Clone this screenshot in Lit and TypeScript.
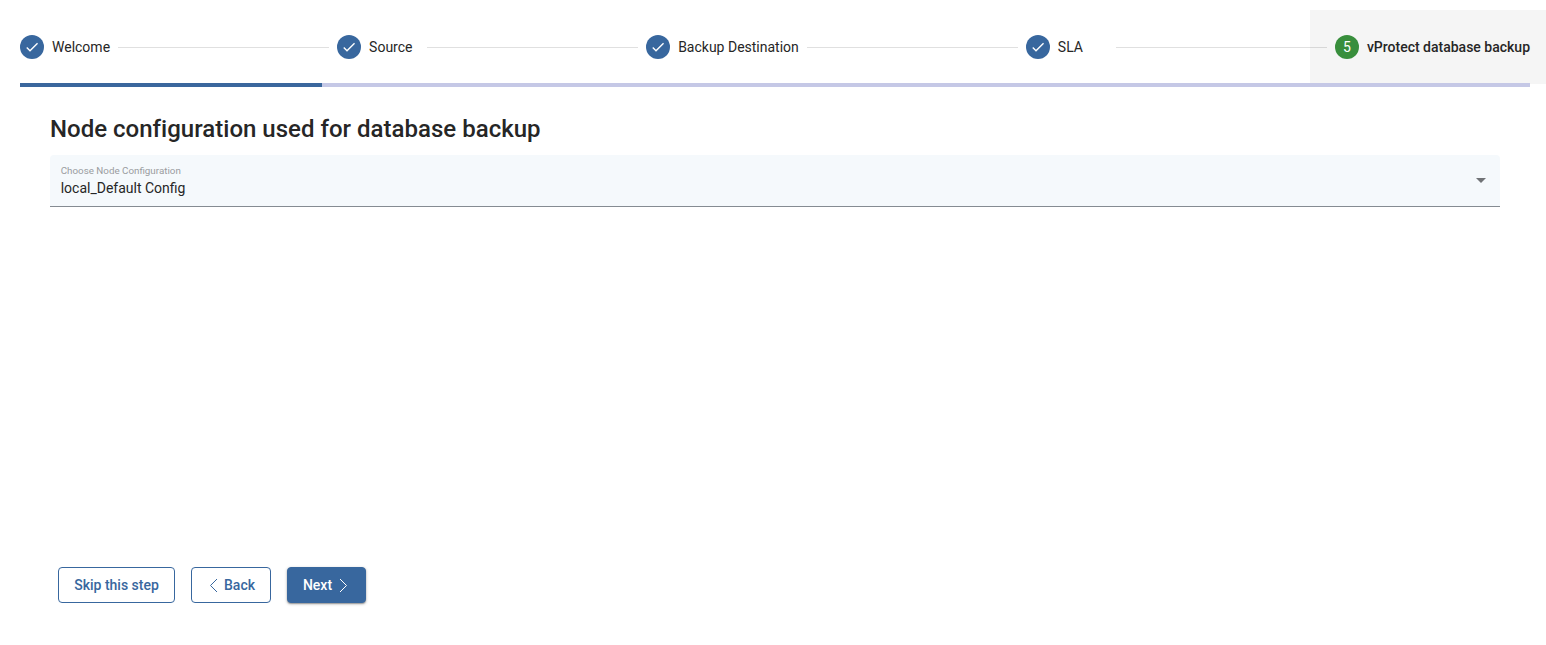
import { LitElement, html, css } from 'lit';
import { customElement, property } from 'lit/decorators.js';
import { classMap } from 'lit/directives/class-map.js';

@customElement('step-header')
class StepHeader extends LitElement {
  @property() label = '';
  @property({ type: Number }) index = 1;
  @property({ type: Boolean, reflect: true }) active = false;

  static styles = css`
    :host { display: flex; align-items: center; height: 74px; flex: none; box-sizing: border-box; }
    :host([active]) { background: #f5f5f5; padding: 0 16px 0 24.5px; margin-left: -24.5px; }
    .icon { width: 24px; height: 24px; border-radius: 50%; background: #38679e; color: #fff; display: flex;
      align-items: center; justify-content: center; margin-right: 8px; flex: none; font-size: 14px; }
    .icon.current { background: #388e3c; }
    .label { min-width: 50px; font-size: 14px; white-space: nowrap; }
    .label.current { font-weight: 500; }
  `;

  render() {
    const state = { current: this.active };
    return html`
      <div class="icon ${classMap(state)}">
        ${this.active
          ? this.index
          : html`<svg width="16" height="16" viewBox="0 0 24 24" fill="#fff"><path d="M9 16.17 4.83 12l-1.42 1.41L9 19 21 7l-1.41-1.41z" /></svg>`}
      </div>
      <div class="label ${classMap(state)}">${this.label}</div>`;
  }
}

@customElement('app-root')
class AppRoot extends LitElement {
  private steps = ['Welcome', 'Source', 'Backup Destination', 'SLA', 'vProtect database backup'];

  static styles = css`
    :host { display: flex; flex-direction: column; height: 645px; padding-top: 10px; box-sizing: border-box;
      background: #fff; color: #262626; font-family: Roboto, sans-serif; font-size: 14px; }
    .steps { display: flex; align-items: center; padding-left: 20px; flex: none; }
    .line { flex: 1; height: 1px; margin: 1px 8px 0; background: rgba(0, 0, 0, 0.12); z-index: 1; }
    .progress { height: 4px; margin: -1px 16px 0 20px; background: #c5c8e6; flex: none; z-index: 1; }
    .bar { height: 4px; background: #3a679d; }
    .content { flex: 1; padding: 26px 46px 0 50px; }
    h1 { margin: 0; font-size: 24px; line-height: 32px; font-weight: 500; letter-spacing: 0.015px; }
    .field { display: flex; align-items: center; height: 52px; margin-top: 10px; padding: 0 14px 0 10.7px;
      box-sizing: border-box; background: #f5f9fc; border-bottom: 1px solid #858b92; border-radius: 4px 4px 0 0; }
    .texts { flex: 1; padding-top: 1px; }
    .caption { height: 14px; font-size: 9.8px; line-height: 13px; color: #9a9c9f; }
    .value { font-size: 14px; line-height: 20px; }
    .arrow { border: 5px solid transparent; border-top-color: #707376; border-bottom: 0; }
    .actions { display: flex; gap: 16px; padding: 0 58px 42px; flex: none; }
    button { display: flex; align-items: center; justify-content: center; height: 36px; padding: 0; box-sizing: border-box; background: #fff;
      border: 1px solid #38679e; border-radius: 4px; color: #38679e; font: 500 14px Roboto, sans-serif; }
    .skip { width: 117px; }
    .back { width: 80px; gap: 6px; padding-left: 2px; }
    .next { width: 79px; gap: 6.5px; padding-right: 2.5px; background: #38679e; color: #fff;
      box-shadow: 0 1px 3px rgba(0, 0, 0, 0.3), 0 1px 1px rgba(0, 0, 0, 0.2); }
    svg { display: block; }
  `;

  private chevron(d: string) {
    return html`<svg width="9" height="14" viewBox="0 0 9 14" fill="none" stroke="currentColor" stroke-width="1"><path d=${d} /></svg>`;
  }

  render() {
    const last = this.steps.length - 1;
    return html`
      <div class="steps">
        ${this.steps.map((s, i) => html`
          <step-header .label=${s} .index=${i + 1} ?active=${i === last}></step-header>
          ${i < last ? html`<div class="line"></div>` : ''}`)}
      </div>
      <div class="progress"><div class="bar" style="width:20%"></div></div>
      <div class="content">
        <h1>Node configuration used for database backup</h1>
        <div class="field">
          <div class="texts">
            <div class="caption">Choose Node Configuration</div>
            <div class="value">local_Default Config</div>
          </div>
          <div class="arrow"></div>
        </div>
      </div>
      <div class="actions">
        <button class="skip">Skip this step</button>
        <button class="back">${this.chevron('M8 1 L1.5 7.5 L8 14')}<span>Back</span></button>
        <button class="next"><span>Next</span>${this.chevron('M1 1 L7.5 7.5 L1 14')}</button>
      </div>`;
  }
}
